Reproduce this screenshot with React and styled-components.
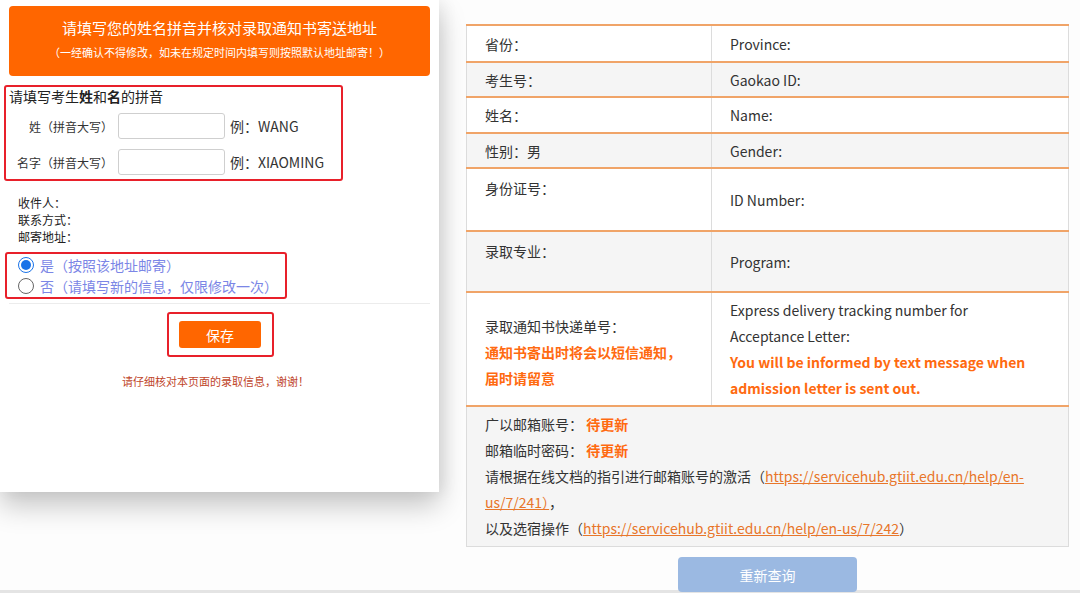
import React from "react"
import styled, { createGlobalStyle } from "styled-components"

const Global = createGlobalStyle`
  html, body {
    margin: 0;
    padding: 0;
    background: #fdfdfd;
    font-family: "Noto Sans CJK SC", "Noto Sans", sans-serif;
    color: #333;
  }
  #root { height: 593px; overflow: hidden; }
`

const Page = styled.div`
  display: flex;
  align-items: flex-start;
  height: 590px;
  border-bottom: 3px solid #e4e4e4;
`

const LeftPanel = styled.div`
  width: 439px;
  height: 492px;
  background: #fff;
  box-shadow: 0 14px 26px rgba(0, 0, 0, 0.22), 6px 0 14px rgba(0, 0, 0, 0.05);
  padding-top: 6px;
  box-sizing: border-box;
  flex-shrink: 0;
`

const Banner = styled.div`
  margin: 0 9px;
  height: 70px;
  background: #ff6600;
  border-radius: 4px;
  color: #fff;
  display: flex;
  flex-direction: column;
  align-items: center;
  padding-top: 11px;
  box-sizing: border-box;
`

const BannerTitle = styled.div`
  font-size: 15px;
  line-height: 22px;
`

const BannerSub = styled.div`
  font-size: 11px;
  line-height: 16px;
  margin-top: 5px;
`

const RedBox = styled.div`
  border: 2px solid #e8202a;
  border-radius: 3px;
  box-sizing: border-box;
  margin-left: ${p => p.$left}px;
  width: ${p => p.$w}px;
  height: ${p => p.$h}px;
`

const NameBox = styled(RedBox)`
  margin-top: 9px;
  padding: 0 0 0 3px;
`

const NameTitle = styled.div`
  font-size: 14px;
  line-height: 18px;
  color: #222;
  b { font-weight: 700; }
`

const NameRow = styled.div`
  display: flex;
  align-items: center;
  height: 26px;
  margin-top: ${p => p.$top}px;
`

const NameLabel = styled.span`
  width: 104px;
  text-align: right;
  font-size: 12px;
  color: #333;
`

const NameInput = styled.input`
  width: 107px;
  height: 26px;
  box-sizing: border-box;
  margin: 0 5px 0 5px;
  border: 1px solid #cfcfcf;
  border-radius: 3px;
  background: #fff;
`

const Example = styled.span`
  font-size: 14px;
  color: #333;
`

const Address = styled.div`
  margin: 13px 0 0 18px;
  font-size: 12px;
  line-height: 17px;
  color: #222;
`

const RadioBox = styled(RedBox)`
  margin-top: 7px;
  padding: 0 0 0 11px;
`

const RadioLine = styled.label`
  display: flex;
  align-items: center;
  height: 21px;
  font-size: 14px;
  color: #7b86e6;
`

const Radio = styled.span`
  width: 16px;
  height: 16px;
  border-radius: 50%;
  box-sizing: border-box;
  margin-right: 6px;
  border: ${p => (p.$on ? "1px solid #1a73e8" : "1px solid #666")};
  background: #fff;
  display: flex;
  align-items: center;
  justify-content: center;
  &::after {
    content: "";
    width: 10px;
    height: 10px;
    border-radius: 50%;
    background: ${p => (p.$on ? "#1a73e8" : "transparent")};
  }
`

const Divider = styled.div`
  margin: 4px 9px 0;
  border-top: 1px solid #ececec;
`

const SaveWrap = styled.div`
  display: flex;
  justify-content: center;
  margin-top: 8px;
`

const SaveBox = styled(RedBox)`
  display: flex;
  align-items: center;
  justify-content: center;
  margin-left: 1px;
`

const SaveButton = styled.button`
  width: 82px;
  height: 27px;
  border: none;
  border-radius: 3px;
  background: #ff6600;
  color: #fff;
  font-family: inherit;
  font-size: 14px;
  padding: 0;
`

const Note = styled.div`
  margin-top: 16px;
  text-align: center;
  padding-right: 8px;
  font-size: 11px;
  color: #c0452a;
`

const RightSide = styled.div`
  margin-left: 27px;
  padding-top: 24px;
  width: 603px;
  display: flex;
  flex-direction: column;
  align-items: center;
`

const Table = styled.table`
  width: 603px;
  border-collapse: collapse;
  border-left: 1px solid #dcdcdc;
  border-right: 1px solid #dcdcdc;
  border-bottom: 1px solid #dcdcdc;
  font-size: 14px;
  color: #333;
`

const Row = styled.tr`
  height: ${p => p.$h}px;
  background: ${p => (p.$gray ? "#f5f5f5" : "#fff")};
  border-top: 2px solid #f0a468;
`

const Cell = styled.td`
  width: ${p => (p.$right ? "auto" : "226px")};
  padding: 0 0 0 18px;
  vertical-align: ${p => p.$align || "middle"};
  border-left: ${p => (p.$right ? "1px solid #dcdcdc" : "none")};
  line-height: 26px;
`

const TopPad = styled.div`
  padding-top: ${p => p.$pad}px;
`

const Hot = styled.span`
  color: #ff6a10;
  font-weight: 700;
`

const InfoCell = styled.td`
  padding: 4px 18px 5px 18px;
  line-height: 26px;
`

const Link = styled.a`
  color: #e8762a;
  text-decoration: underline;
`

const QueryButton = styled.button`
  margin-top: 10px;
  width: 179px;
  height: 35px;
  border: none;
  border-radius: 4px;
  background: #9bb9e2;
  color: #fff;
  font-family: inherit;
  font-size: 14px;
`

export default function App() {
  return (
    <>
      <Global />
      <Page>
        <LeftPanel>
          <Banner>
            <BannerTitle>请填写您的姓名拼音并核对录取通知书寄送地址</BannerTitle>
            <BannerSub>（一经确认不得修改，如未在规定时间内填写则按照默认地址邮寄！）</BannerSub>
          </Banner>

          <NameBox $left={4} $w={339} $h={96}>
            <NameTitle>请填写考生<b>姓</b>和<b>名</b>的拼音</NameTitle>
            <NameRow $top={8}>
              <NameLabel>姓（拼音大写）</NameLabel>
              <NameInput />
              <Example>例：WANG</Example>
            </NameRow>
            <NameRow $top={10}>
              <NameLabel>名字（拼音大写）</NameLabel>
              <NameInput />
              <Example>例：XIAOMING</Example>
            </NameRow>
          </NameBox>

          <Address>
            <div>收件人：</div>
            <div>联系方式：</div>
            <div>邮寄地址：</div>
          </Address>

          <RadioBox $left={5} $w={282} $h={47}>
            <RadioLine><Radio $on />是（按照该地址邮寄）</RadioLine>
            <RadioLine><Radio />否（请填写新的信息，仅限修改一次）</RadioLine>
          </RadioBox>

          <Divider />

          <SaveWrap>
            <SaveBox $left={0} $w={107} $h={45}>
              <SaveButton>保存</SaveButton>
            </SaveBox>
          </SaveWrap>

          <Note>请仔细核对本页面的录取信息，谢谢！</Note>
        </LeftPanel>

        <RightSide>
          <Table>
            <tbody>
              <Row $h={37}>
                <Cell>省份：</Cell>
                <Cell $right>Province:</Cell>
              </Row>
              <Row $h={35} $gray>
                <Cell>考生号：</Cell>
                <Cell $right>Gaokao ID:</Cell>
              </Row>
              <Row $h={36}>
                <Cell>姓名：</Cell>
                <Cell $right>Name:</Cell>
              </Row>
              <Row $h={35} $gray>
                <Cell>性别：男</Cell>
                <Cell $right>Gender:</Cell>
              </Row>
              <Row $h={63}>
                <Cell $align="top"><TopPad $pad={6}>身份证号：</TopPad></Cell>
                <Cell $right>ID Number:</Cell>
              </Row>
              <Row $h={61} $gray>
                <Cell $align="top"><TopPad $pad={6}>录取专业：</TopPad></Cell>
                <Cell $right>Program:</Cell>
              </Row>
              <Row $h={114}>
                <Cell>
                  <TopPad $pad={6}>
                    录取通知书快递单号：<br />
                    <Hot>通知书寄出时将会以短信通知，</Hot><br />
                    <Hot>届时请留意</Hot>
                  </TopPad>
                </Cell>
                <Cell $right>
                  Express delivery tracking number for<br />
                  Acceptance Letter:<br />
                  <Hot>You will be informed by text message when</Hot><br />
                  <Hot>admission letter is sent out.</Hot>
                </Cell>
              </Row>
              <Row $h={137} $gray>
                <InfoCell colSpan={2}>
                  广以邮箱账号：&nbsp;<Hot>待更新</Hot><br />
                  邮箱临时密码：&nbsp;<Hot>待更新</Hot><br />
                  请根据在线文档的指引进行邮箱账号的激活（<Link href="#">https://servicehub.gtiit.edu.cn/help/en-<br />us/7/241）</Link>，<br />
                  以及选宿操作（<Link href="#">https://servicehub.gtiit.edu.cn/help/en-us/7/242</Link>）
                </InfoCell>
              </Row>
            </tbody>
          </Table>
          <QueryButton>重新查询</QueryButton>
        </RightSide>
      </Page>
    </>
  )
}
